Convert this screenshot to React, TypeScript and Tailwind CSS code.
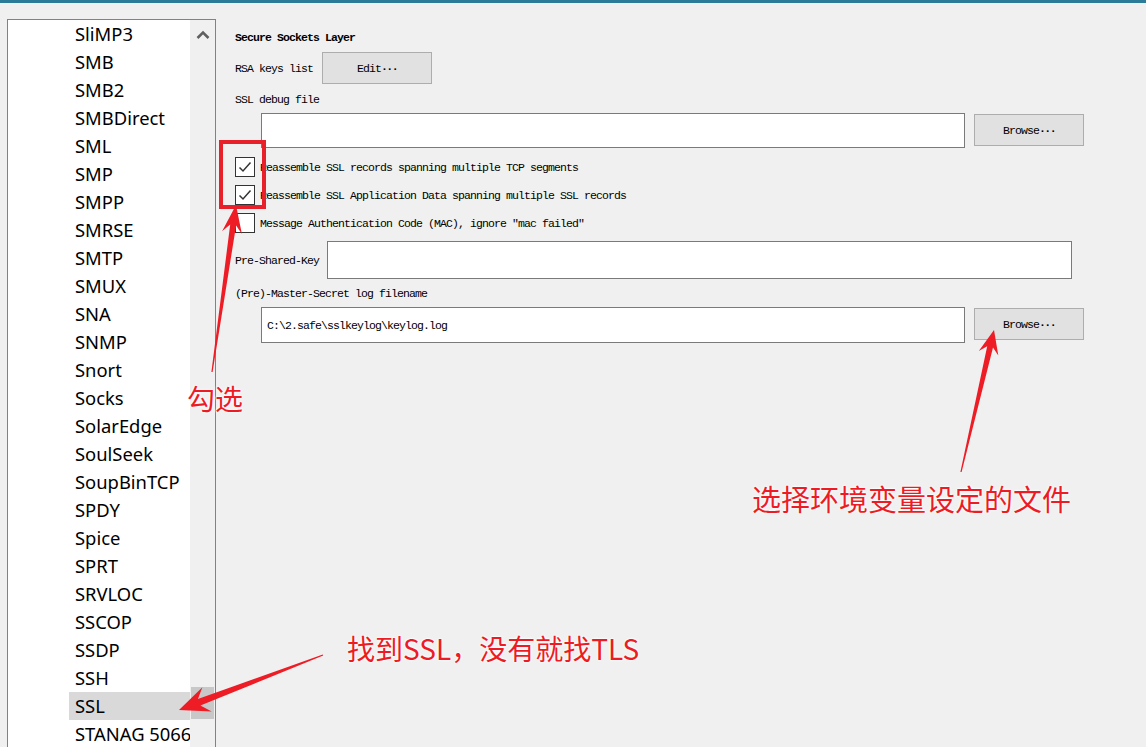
import React from 'react'

const protocols = [
  'SliMP3', 'SMB', 'SMB2', 'SMBDirect', 'SML', 'SMP', 'SMPP', 'SMRSE', 'SMTP', 'SMUX',
  'SNA', 'SNMP', 'Snort', 'Socks', 'SolarEdge', 'SoulSeek', 'SoupBinTCP', 'SPDY', 'Spice',
  'SPRT', 'SRVLOC', 'SSCOP', 'SSDP', 'SSH', 'SSL', 'STANAG 5066',
]

// tapered annotation arrow, tail -> tip
function arrowPoints(x1: number, y1: number, x2: number, y2: number, headLen: number, headW: number, neckW: number) {
  const len = Math.hypot(x2 - x1, y2 - y1)
  const ux = (x2 - x1) / len
  const uy = (y2 - y1) / len
  const nx = -uy
  const ny = ux
  const neck = headLen * 0.72
  const pts = [
    [x1 + nx * 0.6, y1 + ny * 0.6],
    [x2 - ux * neck + nx * neckW / 2, y2 - uy * neck + ny * neckW / 2],
    [x2 - ux * headLen + nx * headW / 2, y2 - uy * headLen + ny * headW / 2],
    [x2, y2],
    [x2 - ux * headLen - nx * headW / 2, y2 - uy * headLen - ny * headW / 2],
    [x2 - ux * neck - nx * neckW / 2, y2 - uy * neck - ny * neckW / 2],
    [x1 - nx * 0.6, y1 - ny * 0.6],
  ]
  return pts.map(p => p[0].toFixed(1) + ',' + p[1].toFixed(1)).join(' ')
}

const mono = "font-['Liberation_Mono',monospace] text-[11.5px] tracking-[-0.9px] text-black pt-[2px]"

function Checkbox({ checked }: { checked: boolean }) {
  return (
    <div className="w-[20px] h-[20px] border border-[#333333] bg-white flex items-center justify-center">
      {checked && (
        <svg width="16" height="16" viewBox="0 0 16 16">
          <path d="M2.5 8.5 L6 12 L13.5 3.5" fill="none" stroke="#333333" strokeWidth="1.5" />
        </svg>
      )}
    </div>
  )
}

function Button({ label, className }: { label: string; className?: string }) {
  return (
    <div className={`w-[110px] h-[32px] bg-[#e1e1e1] border border-[#adadad] flex items-center justify-center ${mono} ${className ?? ''}`}>
      {label}<span className="tracking-[-1.5px] font-bold">···</span>
    </div>
  )
}

function ProtocolList() {
  return (
    <div className="mt-[16px] ml-[7px] w-[209px] h-[740px] border border-[#828282] bg-white flex">
      <div className="w-[182px] overflow-hidden">
        {protocols.map(p => (
          <div
            key={p}
            className={`h-[28px] ml-[61px] w-[121px] pl-[6px] flex items-center whitespace-nowrap font-['Noto_Sans',sans-serif] text-[18.4px] text-black ${p === 'SSL' ? 'bg-[#d9d9d9]' : ''}`}
          >
            {p}
          </div>
        ))}
      </div>
      <div className="w-[25px] bg-[#f0f0f0] flex flex-col items-center">
        <div className="h-[30px] w-full flex items-center justify-center">
          <svg width="14" height="10" viewBox="0 0 14 10">
            <path d="M1.5 8 L7 2.5 L12.5 8" fill="none" stroke="#606060" strokeWidth="2.5" />
          </svg>
        </div>
        <div className="mt-[637px] w-[23px] h-[32px] bg-[#c8c8c8]" />
      </div>
    </div>
  )
}

function SslPanel() {
  return (
    <div className="ml-[19px] flex flex-col">
      <div className={`mt-[26px] h-[16px] flex items-center font-bold ${mono}`}>Secure Sockets Layer</div>

      <div className="mt-[7px] h-[32px] flex items-center">
        <span className={`w-[87px] ${mono}`}>RSA keys list</span>
        <Button label="Edit" />
      </div>

      <div className={`mt-[7px] h-[16px] flex items-center ${mono}`}>SSL debug file</div>

      <div className="mt-[6px] flex items-start">
        <div className="ml-[26px] w-[704px] h-[35px] bg-white border border-[#7a7a7a]" />
        <Button label="Browse" className="ml-[9px] mt-[1px]" />
      </div>

      <div className="mt-[5px] flex flex-col">
        {[
          ['Reassemble SSL records spanning multiple TCP segments', true],
          ['Reassemble SSL Application Data spanning multiple SSL records', true],
          ['Message Authentication Code (MAC), ignore "mac failed"', false],
        ].map(([text, checked]) => (
          <div key={text as string} className="h-[28px] flex items-center gap-[5px]">
            <Checkbox checked={checked as boolean} />
            <span className={mono}>{text as string}</span>
          </div>
        ))}
      </div>

      <div className="mt-[4px] flex items-center">
        <span className={`w-[92px] ${mono}`}>Pre-Shared-Key</span>
        <div className="w-[745px] h-[38px] bg-white border border-[#7a7a7a]" />
      </div>

      <div className={`mt-[6px] h-[16px] flex items-center ${mono}`}>(Pre)-Master-Secret log filename</div>

      <div className="mt-[6px] flex items-start">
        <div className={`ml-[26px] w-[704px] h-[36px] bg-white border border-[#7a7a7a] flex items-center pl-[5px] ${mono}`}>
          C:\2.safe\sslkeylog\keylog.log
        </div>
        <Button label="Browse" className="ml-[9px] mt-[1px]" />
      </div>
    </div>
  )
}

const note = "absolute leading-none whitespace-nowrap font-['Noto_Sans_CJK_SC',sans-serif] text-[#ed1c24] [text-shadow:0_0_2px_#fff,0_0_2px_#fff,0_0_3px_#fff]"

export default function App() {
  return (
    <div className="relative w-[1146px] h-[747px] overflow-hidden bg-[#f0f0f0]">
      <div className="h-[3px] bg-[#2c7b99]" />
      <div className="flex">
        <ProtocolList />
        <SslPanel />
      </div>

      {/* annotations */}
      <svg className="absolute inset-0 pointer-events-none" width="1146" height="747">
        <rect x="221" y="142" width="43" height="65" fill="none" stroke="#e8202a" strokeWidth="4" />
        <polygon points={arrowPoints(212, 372, 236, 205, 28, 20, 6)} fill="#ee1c25" />
        <polygon points={arrowPoints(961, 472, 994, 330, 24, 20, 6)} fill="#ee1c25" />
        <polygon points={arrowPoints(323, 655, 179, 710, 30, 26, 7)} fill="#ee1c25" />
      </svg>
      <div className={`${note} left-[187px] top-[384px] text-[28px]`}>勾选</div>
      <div className={`${note} left-[752px] top-[484px] text-[29px]`}>选择环境变量设定的文件</div>
      <div className={`${note} left-[347px] top-[634px] text-[28px]`}>找到SSL，没有就找TLS</div>
    </div>
  )
}
